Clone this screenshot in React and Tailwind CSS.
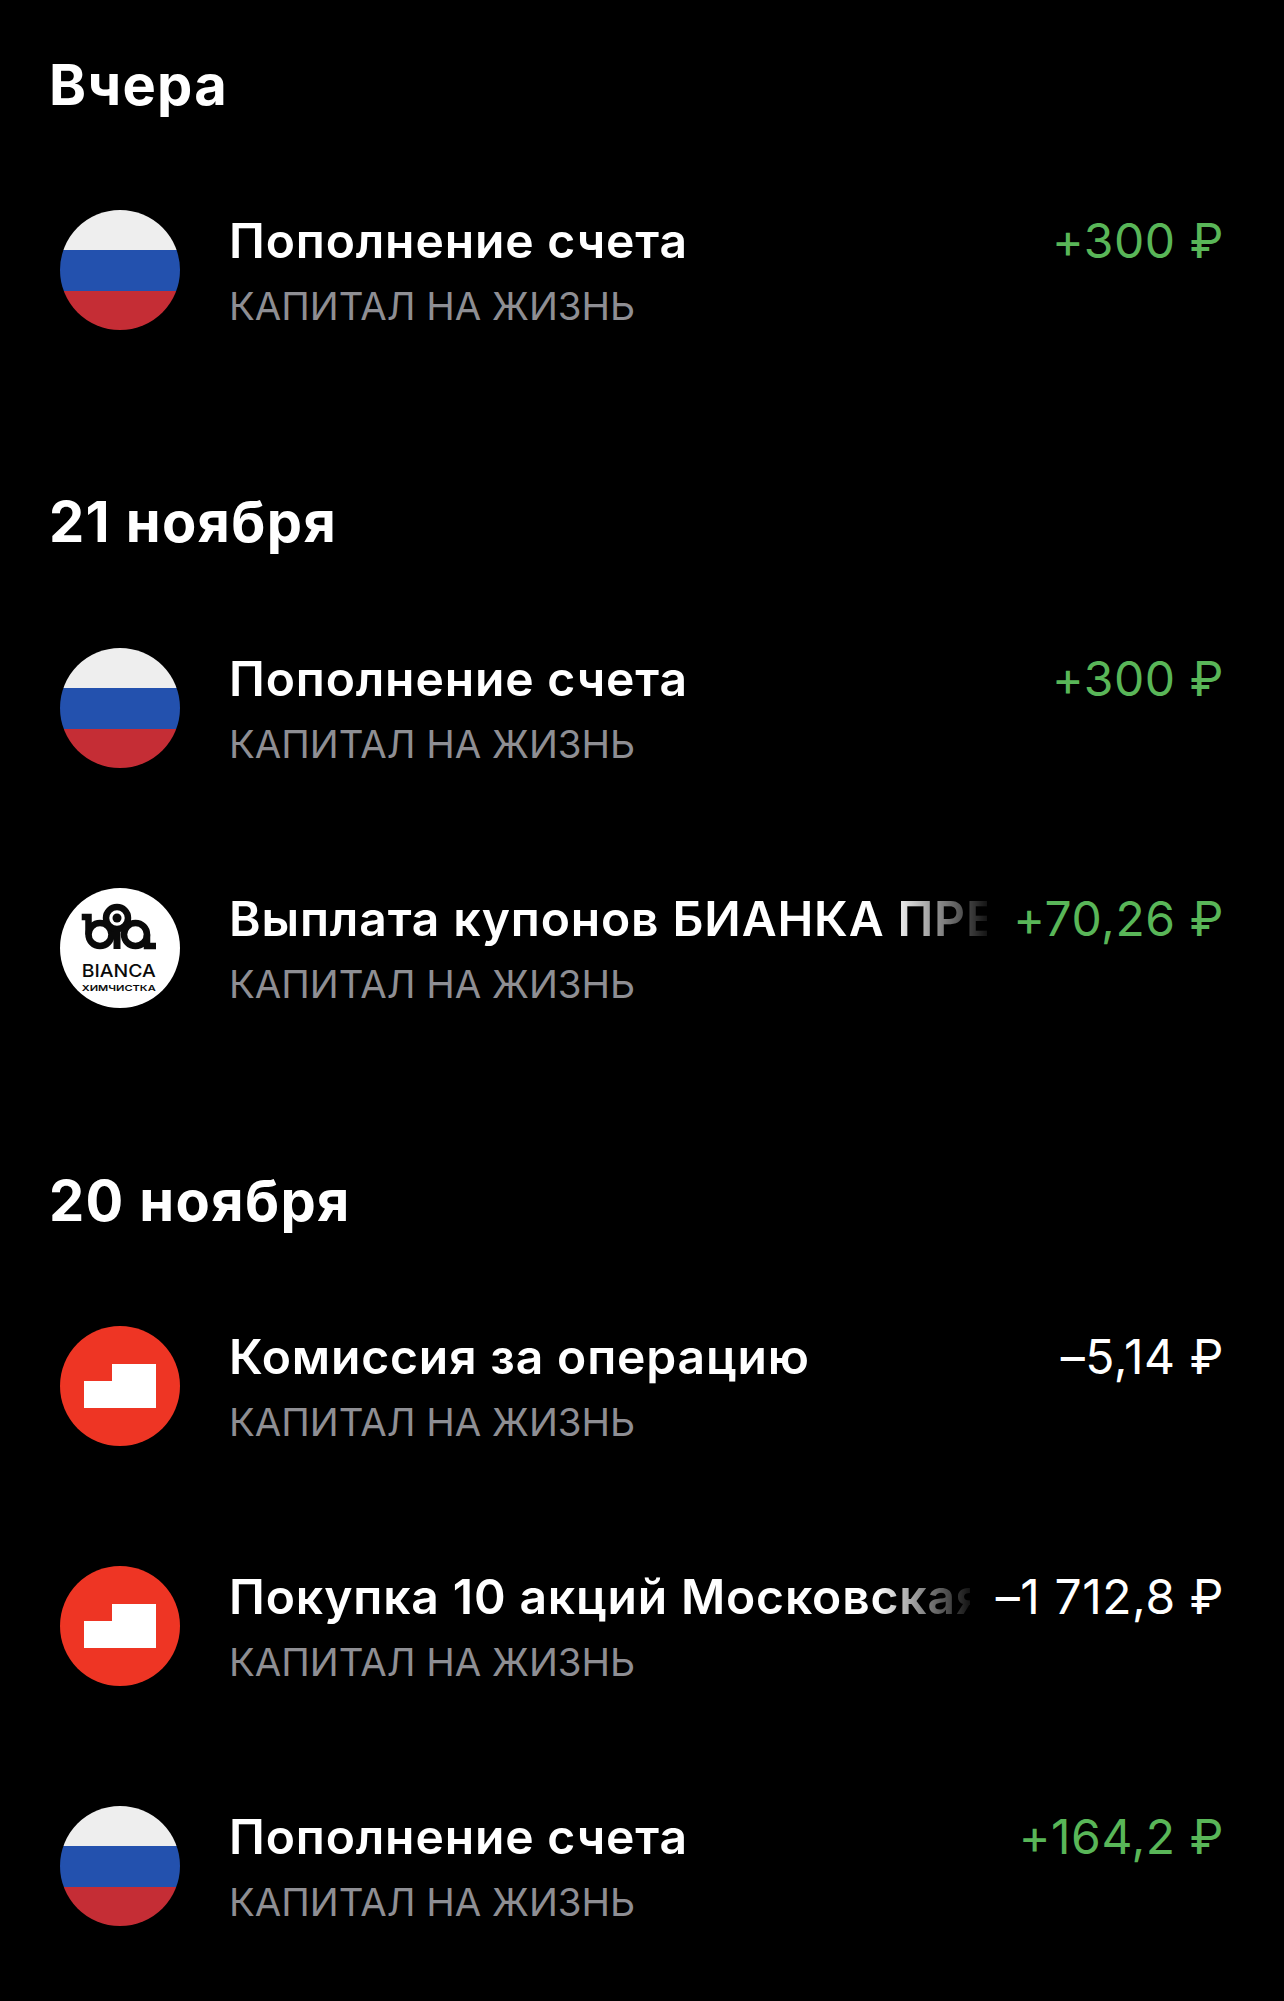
import React from "react";

const FONT = "font-['Inter','Liberation_Sans',sans-serif]";

function Flag() {
  return (
    <div className="flex h-[120px] w-[120px] shrink-0 flex-col overflow-hidden rounded-full">
      <div className="h-[40px] bg-[#eeeeee]" />
      <div className="h-[41px] bg-[#2351ae]" />
      <div className="h-[39px] bg-[#c52d35]" />
    </div>
  );
}

function Brick() {
  return (
    <div className="h-[120px] w-[120px] shrink-0 rounded-full bg-[#ee3524]">
      <svg viewBox="0 0 120 120" className="h-[120px] w-[120px]">
        <path d="M24 55H52V38H96V82H24Z" fill="#ffffff" />
      </svg>
    </div>
  );
}

function Bianca() {
  return (
    <div className="h-[120px] w-[120px] shrink-0 rounded-full bg-white">
      <svg viewBox="0 0 120 120" className="h-[120px] w-[120px]">
        <g fill="none" stroke="#0a0a0a" strokeWidth="6.5">
          <circle cx="40" cy="46.5" r="11.5" />
          <path d="M21.7 29H28.5V46.5" />
          <circle cx="57" cy="30" r="11" />
          <path d="M57 41V61" strokeWidth="7" />
          <circle cx="75.5" cy="46.5" r="11.5" />
          <path d="M87 46.5V58H96" />
        </g>
        <circle cx="57" cy="30" r="4.5" fill="#0a0a0a" />
        <text x="21.7" y="88.7" fontSize="17.5" fontWeight="500" fill="#0a0a0a" textLength="74" lengthAdjust="spacingAndGlyphs" fontFamily="Inter, sans-serif">BIANCA</text>
        <text x="21.7" y="103" fontSize="8" fontWeight="600" fill="#0a0a0a" textLength="74" lengthAdjust="spacingAndGlyphs" fontFamily="Inter, sans-serif">ХИМЧИСТКА</text>
      </svg>
    </div>
  );
}

function Row({ icon, title, amount, positive }) {
  return (
    <div className="flex h-[240px] items-start pl-[10px] pr-[10px] pt-[60px]">
      {icon}
      <div className="ml-[49px] min-w-0 flex-1 pt-[1px]">
        <div className="flex items-start">
          <div className="min-w-0 flex-1 overflow-hidden whitespace-nowrap text-[48px] font-semibold leading-[60px] tracking-[0.018em] text-white [mask-image:linear-gradient(to_right,black_calc(100%-95px),transparent_calc(100%+8px))]">
            {title}
          </div>
          <div className={"ml-[26px] shrink-0 whitespace-nowrap text-[48px] font-normal leading-[60px] tracking-[0.012em] " + (positive ? "text-[#59b658]" : "text-white")}>
            {amount}
          </div>
        </div>
        <div className="mt-[10px] text-[38.4px] font-normal leading-[50px] text-[#8e8e93]">КАПИТАЛ НА ЖИЗНЬ</div>
      </div>
    </div>
  );
}

function Heading({ children }) {
  return <h2 className="-ml-[1px] text-[56px] font-bold leading-[60px] tracking-[0.024em] text-white">{children}</h2>;
}

export default function App() {
  return (
    <div className={"h-[2001px] overflow-hidden bg-black px-[50px] pt-[55px] " + FONT}>
      <Heading>Вчера</Heading>
      <div className="mt-[35px]">
        <Row icon={<Flag />} title="Пополнение счета" amount="+300 ₽" positive />
      </div>
      <div className="mt-[102px]">
        <Heading>21 ноября</Heading>
      </div>
      <div className="mt-[36px]">
        <Row icon={<Flag />} title="Пополнение счета" amount="+300 ₽" positive />
        <Row icon={<Bianca />} title="Выплата купонов БИАНКА ПРЕМИУМ" amount="+70,26 ₽" positive />
      </div>
      <div className="mt-[103px]">
        <Heading>20 ноября</Heading>
      </div>
      <div className="mt-[35px]">
        <Row icon={<Brick />} title="Комиссия за операцию" amount="–5,14 ₽" />
        <Row icon={<Brick />} title="Покупка 10 акций Московская биржа" amount="–1 712,8 ₽" />
        <Row icon={<Flag />} title="Пополнение счета" amount="+164,2 ₽" positive />
      </div>
    </div>
  );
}
